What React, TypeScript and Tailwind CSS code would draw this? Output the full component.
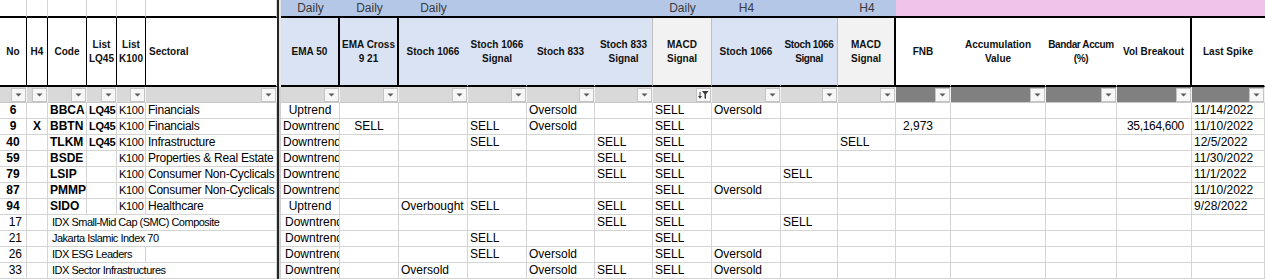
import clsx from 'clsx';
import { Fragment } from 'react';
import type { ReactNode } from 'react';

const GRID =
  'grid grid-cols-[27px_21px_39px_30px_29px_131px_4px_59px_59px_69px_59px_68px_58px_59px_69px_57px_58px_55px_95px_71px_75px_73px] grid-rows-[18px_69px_16px_repeat(11,16px)]';

const BLUE = 'bg-[#dae3f3]';
const GREY = 'bg-[#f2f2f2]';

type Head = { t: ReactNode; bg: string; edge: string; thick?: boolean; left?: boolean; tight?: boolean };

const heads: Head[] = [
  { t: 'No', bg: 'bg-white', edge: 'border-r-black' },
  { t: 'H4', bg: 'bg-white', edge: 'border-r-black' },
  { t: 'Code', bg: 'bg-white', edge: 'border-r-black' },
  { t: <>List<br />LQ45</>, bg: 'bg-white', edge: 'border-r-black' },
  { t: <>List<br />K100</>, bg: 'bg-white', edge: 'border-r-black' },
  { t: 'Sectoral', bg: 'bg-white', edge: 'border-r-white', left: true },
  { t: 'EMA 50', bg: BLUE, edge: 'border-r-black', thick: true },
  { t: <>EMA Cross<br />9 21</>, bg: BLUE, edge: 'border-r-black', thick: true },
  { t: 'Stoch 1066', bg: BLUE, edge: 'border-r-[#dae3f3]' },
  { t: <>Stoch 1066<br />Signal</>, bg: BLUE, edge: 'border-r-[#dae3f3]' },
  { t: 'Stoch 833', bg: BLUE, edge: 'border-r-[#dae3f3]' },
  { t: <>Stoch 833<br />Signal</>, bg: BLUE, edge: 'border-r-[#bfbfbf]' },
  { t: <>MACD<br />Signal</>, bg: GREY, edge: 'border-r-[#bfbfbf]' },
  { t: 'Stoch 1066', bg: BLUE, edge: 'border-r-[#dae3f3]' },
  { t: <>Stoch 1066<br />Signal</>, bg: BLUE, edge: 'border-r-[#bfbfbf]', tight: true },
  { t: <>MACD<br />Signal</>, bg: GREY, edge: 'border-r-black', thick: true },
  { t: 'FNB', bg: 'bg-white', edge: 'border-r-white' },
  { t: <>Accumulation<br />Value</>, bg: 'bg-white', edge: 'border-r-white' },
  { t: <>Bandar Accum<br />(%)</>, bg: 'bg-white', edge: 'border-r-white', tight: true },
  { t: 'Vol Breakout', bg: 'bg-white', edge: 'border-r-black', thick: true },
  { t: 'Last Spike', bg: 'bg-white', edge: 'border-r-white' },
];

const groups = ['Daily', 'Daily', 'Daily', '', '', '', 'Daily', 'H4', '', 'H4'];

const stocks: string[][] = [
  ['6', '', 'BBCA', 'LQ45', 'K100', 'Financials', 'Uptrend', '', '', '', 'Oversold', '', 'SELL', 'Oversold', '', '', '', '', '', '', '11/14/2022'],
  ['9', 'X', 'BBTN', 'LQ45', 'K100', 'Financials', 'Downtrend', 'SELL', '', 'SELL', 'Oversold', '', 'SELL', '', '', '', '2,973', '', '', '35,164,600', '11/10/2022'],
  ['40', '', 'TLKM', 'LQ45', 'K100', 'Infrastructure', 'Downtrend', '', '', 'SELL', '', 'SELL', 'SELL', '', '', 'SELL', '', '', '', '', '12/5/2022'],
  ['59', '', 'BSDE', '', 'K100', 'Properties & Real Estate', 'Downtrend', '', '', '', '', 'SELL', 'SELL', '', '', '', '', '', '', '', '11/30/2022'],
  ['79', '', 'LSIP', '', 'K100', 'Consumer Non-Cyclicals', 'Downtrend', '', '', '', '', 'SELL', 'SELL', '', 'SELL', '', '', '', '', '', '11/1/2022'],
  ['87', '', 'PMMP', '', 'K100', 'Consumer Non-Cyclicals', 'Downtrend', '', '', '', '', '', 'SELL', 'Oversold', '', '', '', '', '', '', '11/10/2022'],
  ['94', '', 'SIDO', '', 'K100', 'Healthcare', 'Uptrend', '', 'Overbought', 'SELL', '', 'SELL', 'SELL', '', '', '', '', '', '', '', '9/28/2022'],
];

// index rows: no, name, then values for the 15 right-hand columns
const indices: { no: string; name: string; split?: boolean; v: string[] }[] = [
  { no: '17', name: 'IDX Small-Mid Cap (SMC) Composite', v: ['Downtrend', '', '', '', '', 'SELL', 'SELL', '', 'SELL', '', '', '', '', '', ''] },
  { no: '21', name: 'Jakarta Islamic Index 70', v: ['Downtrend', '', '', 'SELL', '', '', 'SELL', '', '', '', '', '', '', '', ''] },
  { no: '26', name: 'IDX ESG Leaders', split: true, v: ['Downtrend', '', '', 'SELL', 'Oversold', '', 'SELL', 'Oversold', '', '', '', '', '', '', ''] },
  { no: '33', name: 'IDX Sector Infrastructures', v: ['Downtrend', '', 'Oversold', '', 'Oversold', 'SELL', 'SELL', 'Oversold', '', '', '', '', '', '', ''] },
];

function Cell({ children, className }: { children?: ReactNode; className?: string }) {
  return (
    <div
      className={clsx(
        'overflow-hidden whitespace-nowrap border-r border-b border-r-[#d4d4d4] border-b-[#d4d4d4] bg-white text-black',
        className
      )}
    >
      {children}
    </div>
  );
}

function Sep({ top }: { top?: boolean }) {
  return <div className={clsx('border-l-2 border-l-[#262626]', top ? 'bg-[#e6e6e6]' : 'bg-[#cfcfcf]')} />;
}

function Arrow() {
  return (
    <svg width="7" height="4" viewBox="0 0 7 4">
      <path d="M0.5 0.5h6L3.5 3.5z" fill="#5a5a5a" />
    </svg>
  );
}

function Funnel() {
  return (
    <svg width="11" height="10" viewBox="0 0 11 10">
      <path d="M4 1h6.5L8 4.2V9L6.5 8.2V4.2z" fill="#3c3c3c" />
      <path d="M2 2v4.5" stroke="#3c3c3c" strokeWidth="1" />
      <path d="M0 6h4L2 8.8z" fill="#3c3c3c" />
    </svg>
  );
}

function FilterCell({ dark, funnel }: { dark?: boolean; funnel?: boolean }) {
  return (
    <div
      className={clsx(
        'flex items-center justify-end border-r border-b border-r-[#f2f2f2] border-b-[#c8c8c8]',
        dark ? 'bg-[#808080]' : 'bg-[#d9d9d9]'
      )}
    >
      <div className="flex h-[14px] w-[15px] items-center justify-center border border-[#c4c4c4] bg-[#f7f7f7]">
        {funnel ? <Funnel /> : <Arrow />}
      </div>
    </div>
  );
}

// text style per column, 0..20
function colClass(i: number, indexRow: boolean) {
  const base = 'text-[12px] leading-[15px] px-[2px]';
  switch (i) {
    case 0:
      return indexRow ? base + ' text-right pr-[4px]' : base + ' text-center font-bold';
    case 1:
      return base + ' text-center font-bold';
    case 2:
      return base + ' font-bold';
    case 3:
      return 'text-[11px] leading-[15px] pl-[2px] tracking-[-0.3px] font-bold';
    case 4:
      return 'text-[11px] leading-[15px] pl-[2px] tracking-[-0.3px]';
    case 5:
      return 'text-[12px] leading-[15px] pl-[2px] tracking-[-0.25px]';
    case 6:
      return indexRow ? base + ' pl-[4px]' : base + ' text-center';
    case 7:
      return base + ' text-center';
    case 16:
      return 'text-[12px] leading-[15px] text-right pr-[17px]';
    case 19:
      return 'text-[12px] leading-[15px] text-right pr-[7px] tracking-[-0.3px]';
    default:
      return base;
  }
}

export default function App() {
  return (
    <div className="h-[279px] w-[1265px] overflow-hidden bg-white font-['Liberation_Sans',Arial,sans-serif]">
      <div className={GRID}>
        {/* group row */}
        {[0, 1, 2, 3, 4, 5].map((i) => (
          <div key={'g' + i} className="border-r border-b-2 border-r-[#d4d4d4] border-b-black bg-white" />
        ))}
        <Sep top />
        {groups.map((g, i) => (
          <div
            key={'gb' + i}
            className="border-b-2 border-b-black bg-[#b4c7e7] text-center text-[12px] leading-[16px] text-[#3a3a3a]"
          >
            {g}
          </div>
        ))}
        {[0, 1, 2, 3, 4].map((i) => (
          <div key={'gp' + i} className="border-b-2 border-b-black bg-[#f0c3ea]" />
        ))}

        {/* header row */}
        {heads.map((h, i) => (
          <Fragment key={'h' + i}>
            {i === 6 && <Sep top />}
            <div
              className={clsx(
                'flex items-center border-b-2 border-b-black text-[10px] font-bold leading-[14px] text-[#111]',
                h.thick ? 'border-r-2' : 'border-r',
                h.edge,
                h.bg,
                h.left ? 'justify-start pl-[3px] text-left' : 'justify-center text-center'
              )}
            >
              <span className={clsx('whitespace-nowrap', h.tight && 'tracking-[-0.4px]')}>{h.t}</span>
            </div>
          </Fragment>
        ))}

        {/* filter row */}
        {heads.map((_, i) => (
          <Fragment key={'f' + i}>
            {i === 6 && <Sep />}
            <FilterCell dark={i >= 16} funnel={i === 12} />
          </Fragment>
        ))}

        {/* stock rows */}
        {stocks.map((r) =>
          r.map((v, i) => (
            <Fragment key={r[0] + '-' + i}>
              {i === 6 && <Sep />}
              <Cell className={colClass(i, false)}>{v}</Cell>
            </Fragment>
          ))
        )}

        {/* index rows */}
        {indices.map((r) => (
          <Fragment key={r.no}>
            <Cell className={colClass(0, true)}>{r.no}</Cell>
            <Cell />
            <Cell
              className={clsx(
                'pl-[4px] text-[11px] leading-[15px] tracking-[-0.5px]',
                r.split ? 'col-span-3' : 'col-span-4'
              )}
            >
              {r.name}
            </Cell>
            {r.split && <Cell />}
            <Sep />
            {r.v.map((v, j) => (
              <Cell key={j} className={colClass(j + 6, true)}>
                {v}
              </Cell>
            ))}
          </Fragment>
        ))}
      </div>
    </div>
  );
}
